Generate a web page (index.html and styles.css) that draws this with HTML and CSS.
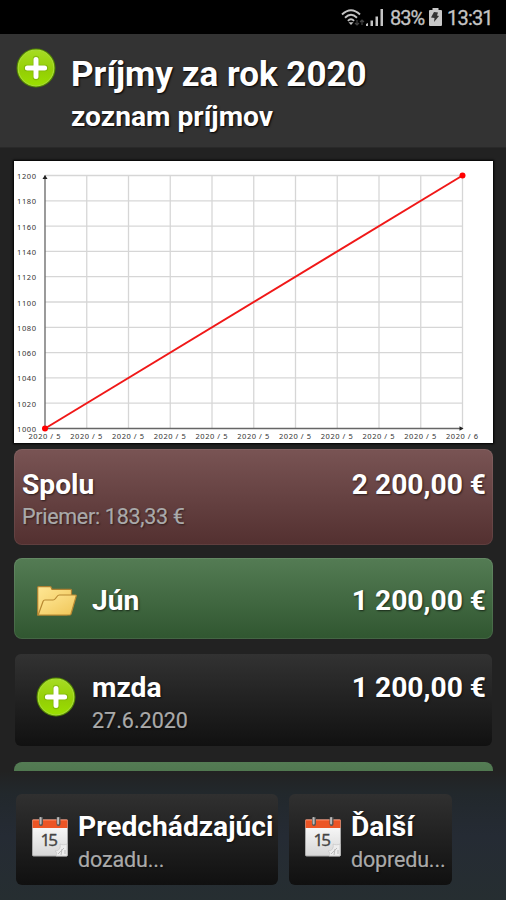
FILE: index.html
```html
<!DOCTYPE html>
<html lang="sk">
<head>
<meta charset="utf-8">
<title>Príjmy za rok 2020</title>
<link rel="stylesheet" href="styles.css">
</head>
<body>
<svg class="defs" width="0" height="0" aria-hidden="true">
  <defs>
    <linearGradient id="lime" x1="0" y1="0" x2="0" y2="1"><stop offset="0" stop-color="#a6dc22"/><stop offset=".6" stop-color="#94cf05"/><stop offset="1" stop-color="#9be000"/></linearGradient>
    <linearGradient id="paper" x1="0" y1="0" x2="0" y2="1"><stop offset="0" stop-color="#fff"/><stop offset="1" stop-color="#d6d6d6"/></linearGradient>
    <linearGradient id="gold" x1="0" y1="0" x2="1" y2="1"><stop offset="0" stop-color="#ffe795"/><stop offset="1" stop-color="#efc557"/></linearGradient>
    <symbol id="plus" viewBox="0 0 40 40">
      <circle cx="20" cy="20" r="19.500" fill="#518500"/>
      <circle cx="20" cy="20" r="17.800" fill="url(#lime)" stroke="#a9dc33" stroke-width="1.200"/>
      <path d="M20 11v18M11 20h18" stroke="#5f9300" stroke-width="6.400" stroke-linecap="round" opacity=".4"/>
      <path d="M20 11.400v17.200M11.400 20h17.200" stroke="#fff" stroke-width="5" stroke-linecap="round"/>
    </symbol>
    <symbol id="calendar" viewBox="0 0 36 40">
      <rect x=".5" y="3" width="35" height="36" rx="1" fill="url(#paper)" stroke="#aaa"/>
      <path d="M.5 3h35v8H.5z" fill="#ec5525"/>
      <path d="M.5 3h35" stroke="#ff8964"/>
      <path d="M9 1v6M26.500 1v6" stroke="#555" stroke-width="4" stroke-linecap="round"/>
      <path d="M8.600 1v5.500M26.100 1v5.500" stroke="#bbb" stroke-width="2" stroke-linecap="round"/>
      <text x="8.500" y="29.300" textLength="17.500" class="cal-day">15</text>
      <path d="M35 27c-2 1-5 1-7 0 1 4-1 7-5 7 2 1 2 3 1 5h11z" fill="#ededed" stroke="#c6c6c6" stroke-width=".7"/>
      <path d="M26 37l6-6M29 38l1-6M33 33v4" stroke="#bbb" stroke-width="1" fill="none"/>
    </symbol>
  </defs>
</svg>

<div class="status">
  <svg class="wifi" width="24" height="20" viewBox="0 0 24 20" fill="none" stroke="#c4c4c4" stroke-width="1.900">
    <path d="M1 6.500Q10-2 19 6.500M4 9.700Q10 4 16 9.700M6.900 12.800Q10 9.700 13.100 12.800"/>
    <path d="M7.500 14.200h5L10 17z" fill="#c4c4c4" stroke="none"/>
    <path d="M16 12v5M14 15l2 2 2-2M21 17v-5M19 14l2-2 2 2" stroke="#444" stroke-width="1.200"/>
  </svg>
  <svg class="signal" width="18" height="19" viewBox="0 0 18 19" fill="#c4c4c4">
    <path d="M0 18v-2l2-1v3zM4.500 12.500H7V18H4.500zM9.500 8.500H12V18H9.500zM14.500 1H17v17h-2.500z"/>
  </svg>
  <span class="percent">83%</span>
  <svg class="battery" width="13" height="19" viewBox="0 0 13 19">
    <path d="M3.500 0h6v2H12q1 0 1 1v14q0 1-1 1H1q-1 0-1-1V3q0-1 1-1h2.500z" fill="#c9c9c9"/>
    <path d="M5 4l4 .5-1 3 2 .5-5 6 .5-4L2 9.500z" fill="#333"/>
  </svg>
  <span class="clock">13:31</span>
</div>

<header class="header">
  <svg class="icon header-icon"><use href="#plus"/></svg>
  <div class="titles">
    <h1>Príjmy za rok 2020</h1>
    <h2>zoznam príjmov</h2>
  </div>
</header>

<main class="list">
  <svg class="chart" width="479" height="282" viewBox="0 0 479 282">
    <path class="grid" d="M31 14.500H448.500M31 39.800H448.500M31 65.100H448.500M31 90.400H448.500M31 115.700H448.500M31 141H448.500M31 166.300H448.500M31 191.600H448.500M31 216.900H448.500M31 242.200H448.500M72.750 14.500V267.500M114.500 14.500V267.500M156.250 14.500V267.500M198 14.500V267.500M239.750 14.500V267.500M281.500 14.500V267.500M323.250 14.500V267.500M365 14.500V267.500M406.750 14.500V267.500M448.500 14.500V267.500"/>
    <path class="axis" d="M31 14.500V267.500H448.500"/>
    <path d="M31 14l2.500 4h-5zM449.500 267.500l-4-2.300v4.600z" fill="#222"/>
    <g class="labels">
      <text x="3" y="18" textLength="19">1200</text><text x="3" y="43.300" textLength="19">1180</text><text x="3" y="68.600" textLength="19">1160</text><text x="3" y="93.900" textLength="19">1140</text><text x="3" y="119.200" textLength="19">1120</text><text x="3" y="144.500" textLength="19">1100</text><text x="3" y="169.800" textLength="19">1080</text><text x="3" y="195.100" textLength="19">1060</text><text x="3" y="220.400" textLength="19">1040</text><text x="3" y="245.700" textLength="19">1020</text><text x="3" y="270.500" textLength="19">1000</text>
      <text x="14.500" y="278.300" textLength="32">2020 / 5</text><text x="56.250" y="278.300" textLength="32">2020 / 5</text><text x="98" y="278.300" textLength="32">2020 / 5</text><text x="139.750" y="278.300" textLength="32">2020 / 5</text><text x="181.500" y="278.300" textLength="32">2020 / 5</text><text x="223.250" y="278.300" textLength="32">2020 / 5</text><text x="265" y="278.300" textLength="32">2020 / 5</text><text x="306.750" y="278.300" textLength="32">2020 / 5</text><text x="348.500" y="278.300" textLength="32">2020 / 5</text><text x="390.250" y="278.300" textLength="32">2020 / 5</text><text x="432" y="278.300" textLength="32">2020 / 6</text>
    </g>
    <path d="M31 267.500L448.500 14.500" stroke="#f01818" stroke-width="2"/>
    <circle cx="31" cy="267.500" r="3" fill="#f00"/><circle cx="448.500" cy="14.500" r="3" fill="#f00"/>
  </svg>

  <section class="card total">
    <div class="text"><div class="name">Spolu</div><div class="sub">Priemer: 183,33 €</div></div>
    <div class="amount">2 200,00 €</div>
  </section>
  <section class="card month">
    <svg class="folder" width="40" height="30" viewBox="0 0 40 30">
      <path d="M.700 29V1.500Q.700.700 1.500.700H13q1 0 1.300 1l.700 1.600h18.500q1 0 1 1V23L30 29z" fill="url(#gold)" stroke="#ad8031" stroke-width="1.200"/>
      <path d="M1.200 29L6 15.500q.5-1.500 2-1.500h8q1.500 0 2.500-1.500l1.500-2q1-1.500 2.500-1.500h16q1 0 .7 1L34 28q-.3 1-1.500 1z" fill="url(#gold)" stroke="#b88932" stroke-width="1.200"/>
    </svg>
    <div class="text"><div class="name">Jún</div></div>
    <div class="amount">1 200,00 €</div>
  </section>
  <section class="card entry">
    <svg class="icon"><use href="#plus"/></svg>
    <div class="text"><div class="name">mzda</div><div class="sub">27.6.2020</div></div>
    <div class="amount">1 200,00 €</div>
  </section>
  <section class="card next-month"></section>
</main>

<footer class="footer">
  <div class="button previous">
    <svg class="calendar"><use href="#calendar"/></svg>
    <div class="text"><div class="name">Predchádzajúci</div><div class="sub">dozadu...</div></div>
  </div>
  <div class="button following">
    <svg class="calendar"><use href="#calendar"/></svg>
    <div class="text"><div class="name">Ďalší</div><div class="sub">dopredu...</div></div>
  </div>
</footer>
</body>
</html>
```
FILE: styles.css
```css
* { box-sizing: border-box; }
body {
  margin: 0; width: 506px; height: 900px; overflow: hidden;
  display: flex; flex-direction: column;
  background: #222; color: #fff;
  font-family: Roboto, "Liberation Sans", sans-serif;
}
.defs { position: absolute; }
.status {
  height: 34px; flex: none; background: #000; color: #c4c4c4;
  display: flex; align-items: flex-start; padding: 8px 13px 0 0; justify-content: flex-end;
  font-size: 20px; line-height: 20px; -webkit-text-stroke: .3px #c4c4c4;
}
.wifi { margin-right: 1px; }
.signal { margin-right: 6px; }
.percent { width: 34px; margin-right: 5px; letter-spacing: -1px; }
.battery { margin-right: 5px; }
.clock { width: 46px; letter-spacing: -.8px; }
.header {
  height: 114px; flex: none; background: #333; border-bottom: 1px solid #292929;
  display: flex; padding: 14px 16px 0;
}
.icon { width: 40px; height: 40px; flex: none; }
.titles { margin-left: 15px; padding-top: 5px; }
h1, h2 { margin: 0; font-weight: 700; white-space: nowrap; text-shadow: 1px 1px 2px #000; }
h1 { font-size: 35px; line-height: 43px; }
h2 { font-size: 28.2px; line-height: 42px; }
.list { height: 623px; flex: none; padding: 13px 13px 0 14px; overflow: hidden; display: flex; flex-direction: column; }
.chart { display: block; flex: none; background: #fff; box-shadow: 0 0 2px 1px #000; }
.grid { stroke: #000; stroke-opacity: .16; fill: none; stroke-width: 1.300; }
.axis { stroke: #666; fill: none; stroke-width: 1.300; }
.labels { font: 7.5px "Noto Sans", sans-serif; fill: #333; }
.cal-day { font: 17px "Open Sans", sans-serif; fill: #444; stroke: #444; stroke-width: .4px; }
.card { display: flex; flex: none; border-radius: 8px; border: 1px solid transparent; }
.text { white-space: nowrap; }
.name, .amount { font-size: 28.2px; line-height: 34px; font-weight: 700; text-shadow: 1px 1px 2px #0009; white-space: nowrap; }
.amount { margin-left: auto; }
.sub { font-size: 21.5px; line-height: 30px; color: #aaa; text-shadow: 1px 1px 2px #0008; -webkit-text-stroke: .2px #aaa; }
.total { height: 96px; margin-top: 6px; padding: 18px 6px 0 7px; background: linear-gradient(#795454, #533030) border-box; border-color: #ffffff12; }
.total .sub { letter-spacing: -.3px; }
.month { height: 81px; margin-top: 13px; padding: 25px 6px 0 22px; background: linear-gradient(#547c54, #305630) border-box; border-color: #ffffff18; }
.folder { margin: 2px 15px 0 0; flex: none; }
.entry { height: 92px; margin: 15px 1px 0 1px; padding: 16px 5px 0 20px; border-radius: 6px; background: linear-gradient(#323232, #111) border-box; }
.entry .icon { margin: 6px 16px 0 0; }
.entry .sub { line-height: 32px; }
.next-month { height: 81px; margin-top: 16px; background: linear-gradient(#547c54, #305630) border-box; }
.footer {
  flex: 1; padding: 23px 15px 0 16px; display: flex; gap: 11px;
  background: linear-gradient(#222 0, #22282c 22px, #252b34 50%, #262e31 100%);
}
.button { height: 91px; flex: none; border-radius: 6px; background: linear-gradient(#303030, #101010); display: flex; padding: 16px 0 0 16px; }
.previous { width: 262px; }
.following { width: 163px; }
.button .sub { letter-spacing: -.15px; line-height: 31px; }
.calendar { width: 36px; height: 40px; flex: none; margin: 7px 10px 0 0; }
```
